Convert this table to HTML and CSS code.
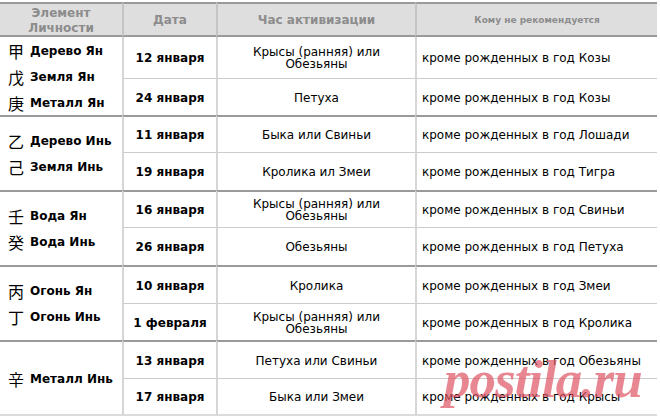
FILE: index.html
```html
<!DOCTYPE html>
<html lang="ru">
<head>
<meta charset="utf-8">
<title>Элементы</title>
<link rel="stylesheet" href="styles.css">
</head>
<body>
<div class="wrap">
  <div class="grid">
    <div class="cell th first">Элемент<br>Личности</div>
    <div class="cell th">Дата</div>
    <div class="cell th">Час активизации</div>
    <div class="cell th small">Кому не рекомендуется</div>

    <div class="cell el g1">
      <div class="ln"><span class="cj">甲</span>Дерево Ян</div>
      <div class="ln"><span class="cj">戊</span>Земля Ян</div>
      <div class="ln"><span class="cj">庚</span>Металл Ян</div>
    </div>
    <div class="cell dt top0">12 января</div>
    <div class="cell hr top0">Крысы (ранняя) или Обезьяны</div>
    <div class="cell nr top0">кроме рожденных в год Козы</div>

    <div class="cell dt">24 января</div>
    <div class="cell hr">Петуха</div>
    <div class="cell nr">кроме рожденных в год Козы</div>

    <div class="cell el">
      <div class="ln"><span class="cj">乙</span>Дерево Инь</div>
      <div class="ln"><span class="cj">己</span>Земля Инь</div>
    </div>
    <div class="cell dt thick">11 января</div>
    <div class="cell hr thick">Быка или Свиньи</div>
    <div class="cell nr thick">кроме рожденных в год Лошади</div>

    <div class="cell dt">19 января</div>
    <div class="cell hr">Кролика ил Змеи</div>
    <div class="cell nr">кроме рожденных в год Тигра</div>

    <div class="cell el">
      <div class="ln"><span class="cj">壬</span>Вода Ян</div>
      <div class="ln"><span class="cj">癸</span>Вода Инь</div>
    </div>
    <div class="cell dt thick">16 января</div>
    <div class="cell hr thick">Крысы (ранняя) или Обезьяны</div>
    <div class="cell nr thick">кроме рожденных в год Свиньи</div>

    <div class="cell dt">26 января</div>
    <div class="cell hr">Обезьяны</div>
    <div class="cell nr">кроме рожденных в год Петуха</div>

    <div class="cell el">
      <div class="ln"><span class="cj">丙</span>Огонь Ян</div>
      <div class="ln"><span class="cj">丁</span>Огонь Инь</div>
    </div>
    <div class="cell dt thick">10 января</div>
    <div class="cell hr thick">Кролика</div>
    <div class="cell nr thick">кроме рожденных в год Змеи</div>

    <div class="cell dt">1 февраля</div>
    <div class="cell hr">Крысы (ранняя) или Обезьяны</div>
    <div class="cell nr">кроме рожденных в год Кролика</div>

    <div class="cell el last">
      <div class="ln"><span class="cj">辛</span>Металл Инь</div>
    </div>
    <div class="cell dt thick">13 января</div>
    <div class="cell hr thick">Петуха или Свиньи</div>
    <div class="cell nr thick">кроме рожденных в год Обезьяны</div>

    <div class="cell dt last">17 января</div>
    <div class="cell hr last">Быка или Змеи</div>
    <div class="cell nr last">кроме рожденных в год Крысы</div>
  </div>
  <div class="mark">postila.ru</div>
</div>
</body>
</html>
```
FILE: styles.css
```css
html, body {
  margin: 0;
  padding: 0;
  background: #ffffff;
}
body {
  font-family: "DejaVu Sans", Verdana, sans-serif;
  font-size: 12px;
  color: #000;
}
.wrap {
  position: relative;
  width: 660px;
  height: 419px;
  overflow: hidden;
  padding-top: 2px;
  box-sizing: border-box;
}
.grid {
  display: grid;
  grid-template-columns: 122px 94px 199px 242px;
  grid-template-rows: 35px 41px 37px 37px 38px 37px 38px 38px 37px 38px 38px;
}
.cell {
  box-sizing: border-box;
  display: flex;
  align-items: center;
  border-left: 2px solid #d6d6d6;
  border-top: 1px solid #cccccc;
  padding-top: 1px;
}
.th {
  background: #dedede;
  color: #8c8c8c;
  font-weight: bold;
  font-size: 12px;
  line-height: 15px;
  justify-content: center;
  text-align: center;
  border-top: 2px solid #9a9a9a;
  border-bottom: 2px solid #9a9a9a;
  border-left-color: #c4c4c4;
  padding-top: 2px;
}
.th.first { border-left: none; }
.th.small { font-size: 9px; }

.top0 { border-top: none; }
.thick { border-top: 2px solid #9a9a9a; }
.last { border-bottom: 2px solid #dcdcdc; }

.el {
  grid-column: 1;
  grid-row: span 2;
  flex-direction: column;
  justify-content: center;
  align-items: flex-start;
  border-left: none;
  border-top: 2px solid #9a9a9a;
  padding-left: 8px;
  font-weight: bold;
}
.el.g1 { border-top: none; }
.ln {
  height: 26px;
  line-height: 26px;
  white-space: nowrap;
  display: flex;
  align-items: center;
}
.cj {
  font-family: "Noto Sans CJK JP", "Noto Sans CJK SC", sans-serif;
  font-weight: normal;
  font-size: 16px;
  line-height: 26px;
  margin-right: 6px;
}
.dt {
  font-weight: bold;
  justify-content: center;
  white-space: nowrap;
}
.hr {
  justify-content: center;
  text-align: center;
  line-height: 12px;
  padding-left: 14px;
  padding-right: 14px;
}
.nr {
  padding-left: 5px;
  white-space: nowrap;
}

.mark {
  position: absolute;
  left: 444px;
  top: 346px;
  font-family: "Liberation Serif", serif;
  font-style: italic;
  font-weight: bold;
  font-size: 53px;
  line-height: 66px;
  color: rgba(222, 84, 100, 0.7);
  letter-spacing: -1px;
  pointer-events: none;
}
```
